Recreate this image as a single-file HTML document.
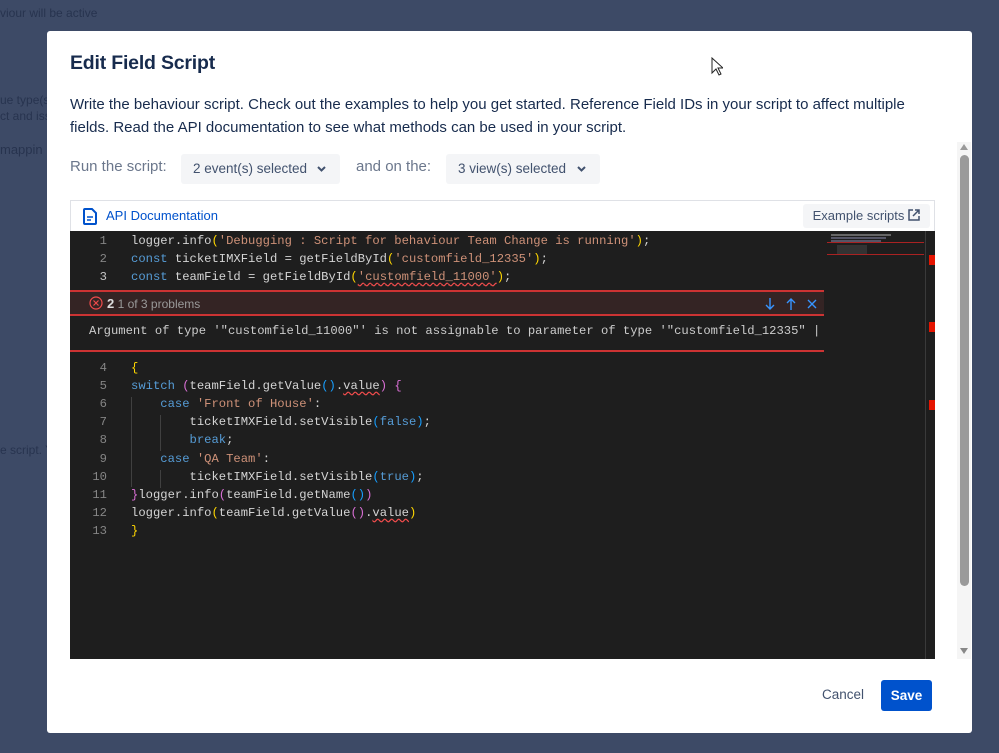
<!DOCTYPE html>
<html><head><style>
*{margin:0;padding:0;box-sizing:border-box}
body{width:999px;height:753px;background:#3d4a66;position:relative;overflow:hidden;font-family:"Liberation Sans",sans-serif}
.bgt{position:absolute;color:#1e2a45;font-size:12px;opacity:.7}
.modal{position:absolute;left:47px;top:31px;width:925px;height:702px;background:#fff;border-radius:3px}
h1{position:absolute;left:23px;top:21px;font-size:19.5px;font-weight:bold;color:#172b4d;letter-spacing:-0.2px}
.desc{position:absolute;left:23px;top:62px;width:852px;font-size:15px;line-height:23px;color:#172b4d}
.lbl{position:absolute;top:127px;font-size:15px;color:#6b778c}
.sel{position:absolute;top:123px;height:30px;background:#f4f5f7;border-radius:3px;font-size:13.5px;color:#42526e;line-height:30px;padding-left:12px}
.sel svg{position:absolute;right:14px;top:12px}
.hdr{position:absolute;left:23px;top:169px;width:865px;height:32px;border:1px solid #dfe1e6;border-bottom:none}
.api{position:absolute;left:35px;top:7px;font-size:13px;color:#0052cc;font-weight:500}
.ex{position:absolute;right:4px;top:3px;height:24px;padding:0 10px;background:#f4f5f7;border-radius:3px;font-size:13px;color:#42526e;line-height:24px}
.ed{position:absolute;left:23px;top:200px;width:865px;height:428px;background:#1e1e1e;font-family:"Liberation Mono",monospace;font-size:12.2px;color:#d4d4d4;overflow:hidden}
.ln{position:absolute;left:0;width:37px;text-align:right;color:#858585;white-space:pre}
.ln.cur{color:#c6c6c6}
.cd{position:absolute;left:61px;white-space:pre}
.k{color:#569cd6}.s{color:#ce9178}.y{color:#ffd700}.p{color:#da70d6}.b{color:#179fff}.u{text-decoration:underline wavy #f14c4c;text-underline-offset:2px}
.red{position:absolute;left:0;width:754px;height:2px;background:#c33}
.ph{position:absolute;left:0;top:61px;width:754px;height:23px;background:#342424}
.mm{position:absolute;left:757px;top:0;width:97px;height:428px}
.mk{position:absolute;left:859px;width:6px;height:10px;background:#e51400}
.sb{position:absolute;left:910px;top:111px;width:14px;height:517px;background:#f5f5f5}
.th{position:absolute;left:3px;top:13px;width:9px;height:431px;background:#9a9a9a;border-radius:5px}
</style></head><body>
<div class="bgt" style="left:0;top:6px">viour will be active</div>
<div class="bgt" style="left:0;top:93px">ue type(s)</div>
<div class="bgt" style="left:0;top:109px">ct and iss</div>
<div class="bgt" style="left:0;top:142px;font-size:13px">mappin</div>
<div class="bgt" style="left:0;top:443px">e script. Y</div>
<div class="modal">
<h1>Edit Field Script</h1>
<div class="desc">Write the behaviour script. Check out the examples to help you get started. Reference Field IDs in your script to affect multiple fields. Read the API documentation to see what methods can be used in your script.</div>
<div class="lbl" style="left:23px">Run the script:</div>
<div class="sel" style="left:134px;width:159px">2 event(s) selected<svg width="9" height="6"><path d="M1 1l3.5 3.5L8 1" fill="none" stroke="#42526e" stroke-width="2"/></svg></div>
<div class="lbl" style="left:309px">and on the:</div>
<div class="sel" style="left:399px;width:154px">3 view(s) selected<svg width="9" height="6"><path d="M1 1l3.5 3.5L8 1" fill="none" stroke="#42526e" stroke-width="2"/></svg></div>
<div class="hdr">
<svg style="position:absolute;left:12px;top:7px" width="14" height="17" viewBox="0 0 14 17"><path d="M2 1h7l4 4v10a1 1 0 0 1-1 1H2a1 1 0 0 1-1-1V2a1 1 0 0 1 1-1z" fill="none" stroke="#0052cc" stroke-width="2"/><path d="M4 9h6M4 12h4" stroke="#0052cc" stroke-width="1.6"/></svg>
<div class="api">API Documentation</div>
<div class="ex">Example scripts <svg width="12" height="12" viewBox="0 0 12 12" style="vertical-align:-1px"><path d="M5 1H1v10h10V7M7 1h4v4M11 1L5 7" fill="none" stroke="#42526e" stroke-width="1.5"/></svg></div>
</div>
<div class="ed">
<div class="ln" style="top:3px">1</div><div class="cd" style="top:3px">logger.info<span class="y">(</span><span class="s">'Debugging : Script for behaviour Team Change is running'</span><span class="y">)</span>;</div>
<div class="ln" style="top:21px">2</div><div class="cd" style="top:21px"><span class="k">const</span> ticketIMXField = getFieldById<span class="y">(</span><span class="s">'customfield_12335'</span><span class="y">)</span>;</div>
<div class="ln cur" style="top:39px">3</div><div class="cd" style="top:39px"><span class="k">const</span> teamField = getFieldById<span class="y">(</span><span class="s u">'customfield_11000'</span><span class="y">)</span>;</div>
<div class="red" style="top:59px"></div>
<div class="ph"><svg style="position:absolute;left:19px;top:4px" width="14" height="14"><circle cx="7" cy="7" r="6" fill="none" stroke="#f14c4c" stroke-width="1.2"/><path d="M4.5 4.5l5 5M9.5 4.5l-5 5" stroke="#f14c4c" stroke-width="1.2"/></svg><span style="position:absolute;left:37px;top:4px;font-family:'Liberation Sans',sans-serif;font-size:12px;color:#ccc"><b style="font-size:13px;color:#ddd">2</b> <span style="color:#999">1 of 3 problems</span></span>
<svg style="position:absolute;left:694px;top:5px" width="58" height="14"><path d="M6 1v11M2 8l4 4 4-4M27 13V2M23 6l4-4 4 4M44 3l8 8M52 3l-8 8" fill="none" stroke="#3794ff" stroke-width="1.4"/></svg></div>
<div class="red" style="top:83px"></div>
<div class="cd" style="left:19px;top:93px;color:#ccc">Argument of type '"customfield_11000"' is not assignable to parameter of type '"customfield_12335" |</div>
<div class="red" style="top:119px"></div>
<div class="ln" style="top:130px">4</div><div class="cd" style="top:130px"><span class="y">{</span></div>
<div class="ln" style="top:148px">5</div><div class="cd" style="top:148px"><span class="k">switch</span> <span class="p">(</span>teamField.getValue<span class="b">()</span>.<span class="u">value</span><span class="p">)</span> <span class="p">{</span></div>
<div class="ln" style="top:166px">6</div><div class="cd" style="top:166px">    <span class="k">case</span> <span class="s">'Front of House'</span>:</div>
<div class="ln" style="top:184px">7</div><div class="cd" style="top:184px">        ticketIMXField.setVisible<span class="b">(</span><span class="k">false</span><span class="b">)</span>;</div>
<div class="ln" style="top:202px">8</div><div class="cd" style="top:202px">        <span class="k">break</span>;</div>
<div class="ln" style="top:221px">9</div><div class="cd" style="top:221px">    <span class="k">case</span> <span class="s">'QA Team'</span>:</div>
<div class="ln" style="top:239px">10</div><div class="cd" style="top:239px">        ticketIMXField.setVisible<span class="b">(</span><span class="k">true</span><span class="b">)</span>;</div>
<div class="ln" style="top:257px">11</div><div class="cd" style="top:257px"><span class="p">}</span>logger.info<span class="p">(</span>teamField.getName<span class="b">()</span><span class="p">)</span></div>
<div class="ln" style="top:275px">12</div><div class="cd" style="top:275px">logger.info<span class="y">(</span>teamField.getValue<span class="p">()</span>.<span class="u">value</span><span class="y">)</span></div>
<div class="ln" style="top:293px">13</div><div class="cd" style="top:293px"><span class="y">}</span></div>
<div style="position:absolute;left:61px;top:166px;width:1px;height:90px;background:#404040"></div>
<div style="position:absolute;left:90px;top:184px;width:1px;height:36px;background:#404040"></div>
<div style="position:absolute;left:90px;top:239px;width:1px;height:18px;background:#404040"></div>
<div class="mm">
<div style="position:absolute;left:4px;top:3px;width:60px;height:2px;background:#666"></div>
<div style="position:absolute;left:4px;top:6px;width:55px;height:2px;background:#556"></div>
<div style="position:absolute;left:4px;top:9px;width:50px;height:2px;background:#556"></div>
<div style="position:absolute;left:0;top:11px;width:97px;height:1px;background:#a22"></div>
<div style="position:absolute;left:10px;top:14px;width:30px;height:10px;background:#333"></div>
<div style="position:absolute;left:0;top:23px;width:97px;height:1px;background:#a22"></div>
</div>
<div style="position:absolute;left:855px;top:0;width:1px;height:428px;background:#3a3a3a"></div>
<div class="mk" style="top:24px"></div><div class="mk" style="top:91px"></div><div class="mk" style="top:169px"></div>
</div>
<div class="sb"><div style="position:absolute;left:3px;top:2px;border:4px solid transparent;border-bottom:6px solid #999;border-top:0"></div><div class="th"></div><div style="position:absolute;left:3px;top:506px;border:4px solid transparent;border-top:6px solid #888;border-bottom:0"></div></div>
<div style="position:absolute;left:775px;top:656px;font-size:13.5px;color:#42526e;font-weight:500">Cancel</div>
<div style="position:absolute;left:834px;top:649px;width:51px;height:31px;background:#0052cc;border-radius:3px;color:#fff;font-size:13.5px;font-weight:bold;text-align:center;line-height:31px">Save</div>
</div>
<svg style="position:absolute;left:711px;top:57px" width="12" height="20"><path d="M1 1v15l4-4 3 6 2-1-3-6h5z" fill="#fff" stroke="#222" stroke-width="1"/></svg>
</body></html>
